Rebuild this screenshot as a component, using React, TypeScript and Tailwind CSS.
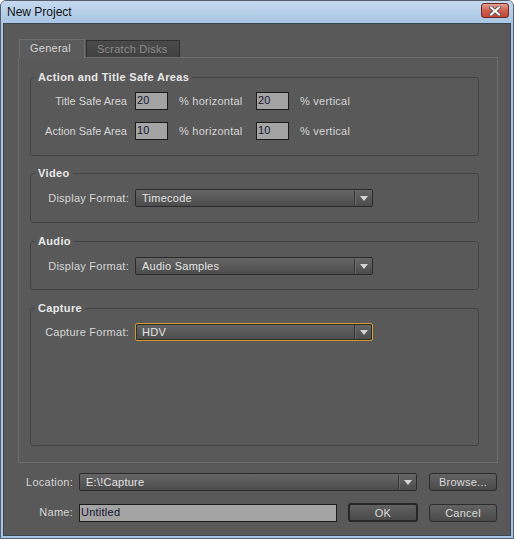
import type { ReactNode } from 'react'

const font = { fontFamily: '"Liberation Sans", Arial, sans-serif' }

function Arrow() {
  return (
    <svg width="8" height="5" viewBox="0 0 8 5">
      <path d="M0 0h8L4 5z" fill="#d4d4d4" />
    </svg>
  )
}

function Dropdown({ value, className, focused }: { value: string; className: string; focused?: boolean }) {
  return (
    <div
      className={`flex h-[18px] items-stretch rounded-[2px] border bg-gradient-to-b from-[#666666] to-[#4c4c4c] ${
        focused ? 'border-[#d39a2a] shadow-[inset_0_0_0_1px_#2e2e2e]' : 'border-[#2a2a2a]'
      } ${className}`}
    >
      <span className="flex-1 truncate pl-[6px] text-[11px] leading-[16px] tracking-[0.25px] text-[#e4e4e4]">{value}</span>
      <span className="my-[1px] w-[2px] border-l border-[#363636] bg-[#6a6a6a]" />
      <span className="flex w-[16px] items-center justify-center">
        <Arrow />
      </span>
    </div>
  )
}

function Field({ value, className }: { value: string; className: string }) {
  return (
    <div className={`h-[18px] border border-[#1b1b1b] bg-[#a4a4a4] pl-[1px] text-[11px] leading-[15px] text-[#141432] ${className}`}>
      {value}
    </div>
  )
}

function Button({ label, primary }: { label: string; primary?: boolean }) {
  return (
    <button
      className={`h-[18px] w-[68px] rounded-[3px] bg-gradient-to-b from-[#626262] to-[#4a4a4a] text-[11px] leading-[14px] tracking-[0.25px] text-[#dadada] ${
        primary ? 'h-[19px] w-[70px] border-2 border-[#262626]' : 'border border-[#2c2c2c]'
      }`}
    >
      {label}
    </button>
  )
}

function Group({ title, className, children }: { title: string; className: string; children?: ReactNode }) {
  return (
    <div className={`w-[449px] rounded-[3px] border border-[#434343] ${className}`}>
      <div className="-mt-[7px] ml-[4px] h-[13px] w-fit bg-[#595959] px-[3px] text-[11px] font-bold leading-[13px] tracking-[0.35px] text-[#e8e8e8]">
        {title}
      </div>
      {children}
    </div>
  )
}

function SafeRow({ label, value, className }: { label: string; value: string; className: string }) {
  return (
    <div className={`flex h-[18px] items-center text-[11px] tracking-[0.25px] text-[#d6d6d6] ${className}`}>
      <span className="w-[96px] text-right tracking-normal">{label}</span>
      <Field value={value} className="ml-[8px] w-[33px]" />
      <span className="ml-[11px] w-[77px]">% horizontal</span>
      <Field value={value} className="w-[33px]" />
      <span className="ml-[11px]">% vertical</span>
    </div>
  )
}

function FormatRow({ label, value, focused }: { label: string; value: string; focused?: boolean }) {
  return (
    <div className="flex h-[18px] items-center text-[11px] tracking-[0.25px] text-[#d6d6d6]">
      <span className="w-[98px] text-right">{label}</span>
      <Dropdown value={value} focused={focused} className="ml-[6px] w-[238px]" />
    </div>
  )
}

export default function App() {
  return (
    <div style={font} className="flex h-[539px] w-[514px] flex-col overflow-hidden rounded-t-[6px] border border-[#55606c] bg-[#a6c4e3]">
      <div className="flex h-[22px] shrink-0 items-center bg-gradient-to-b from-[#c4d9ef] to-[#a9c6e4] pl-[6px] pr-[4px]">
        <span className="flex-1 text-[12px] text-[#101010]">New Project</span>
        <div className="mt-[-3px] flex h-[15px] w-[28px] items-center justify-center rounded-[3px] border border-[#6b2a24] bg-gradient-to-b from-[#e3a093] via-[#cf5f4f] to-[#c44a38]">
          <svg width="12" height="10" viewBox="0 0 12 10">
            <path d="M2 1.5 L10 8.5 M10 1.5 L2 8.5" stroke="#4a4a4a" strokeWidth="3.6" strokeLinecap="square" />
            <path d="M2 1.5 L10 8.5 M10 1.5 L2 8.5" stroke="#ffffff" strokeWidth="2" strokeLinecap="square" />
          </svg>
        </div>
      </div>

      <div className="mx-[2px] flex h-[513px] shrink-0 flex-col border border-[#3a4652] bg-[#595959]">
        <div className="ml-[15px] mt-[15px] flex items-end tracking-[0.25px]">
          <div className="relative z-10 -mb-[1px] h-[19px] w-[66px] border border-b-0 border-[#6e6e6e] bg-[#5b5b5b] pl-[10px] text-[11px] leading-[17px] text-[#d4d4d4]">
            General
          </div>
          <div className="ml-[1px] h-[17px] w-[94px] border border-b-0 border-[#2e2e2e] bg-gradient-to-b from-[#4a4a4a] to-[#404040] pl-[10px] text-[11px] leading-[16px] text-[#8c8c8c]">
            Scratch Disks
          </div>
        </div>

        <div className="ml-[14px] flex h-[406px] w-[480px] flex-col border border-[#6c6c6c] pl-[11px]">
          <Group title="Action and Title Safe Areas" className="mt-[19px] h-[79px]">
            <SafeRow label="Title Safe Area" value="20" className="mt-[8px]" />
            <SafeRow label="Action Safe Area" value="10" className="mt-[12px]" />
          </Group>
          <Group title="Video" className="mt-[17px] h-[50px]">
            <div className="mt-[9px]">
              <FormatRow label="Display Format:" value="Timecode" />
            </div>
          </Group>
          <Group title="Audio" className="mt-[18px] h-[49px]">
            <div className="mt-[9px]">
              <FormatRow label="Display Format:" value="Audio Samples" />
            </div>
          </Group>
          <Group title="Capture" className="mt-[18px] h-[138px]">
            <div className="mt-[8px]">
              <FormatRow label="Capture Format:" value="HDV" focused />
            </div>
          </Group>
        </div>

        <div className="mt-[10px] flex items-center text-[11px] tracking-[0.25px] text-[#d6d6d6]">
          <span className="w-[69px] text-right">Location:</span>
          <Dropdown value="E:\!Capture" className="ml-[6px] w-[338px]" />
          <div className="ml-[12px]">
            <Button label="Browse..." />
          </div>
        </div>
        <div className="mt-[12px] flex items-center text-[11px] tracking-[0.25px] text-[#d6d6d6]">
          <span className="w-[69px] text-right">Name:</span>
          <Field value="Untitled" className="ml-[6px] w-[258px]" />
          <div className="ml-[11px]">
            <Button label="OK" primary />
          </div>
          <div className="ml-[11px]">
            <Button label="Cancel" />
          </div>
        </div>
      </div>
    </div>
  )
}
